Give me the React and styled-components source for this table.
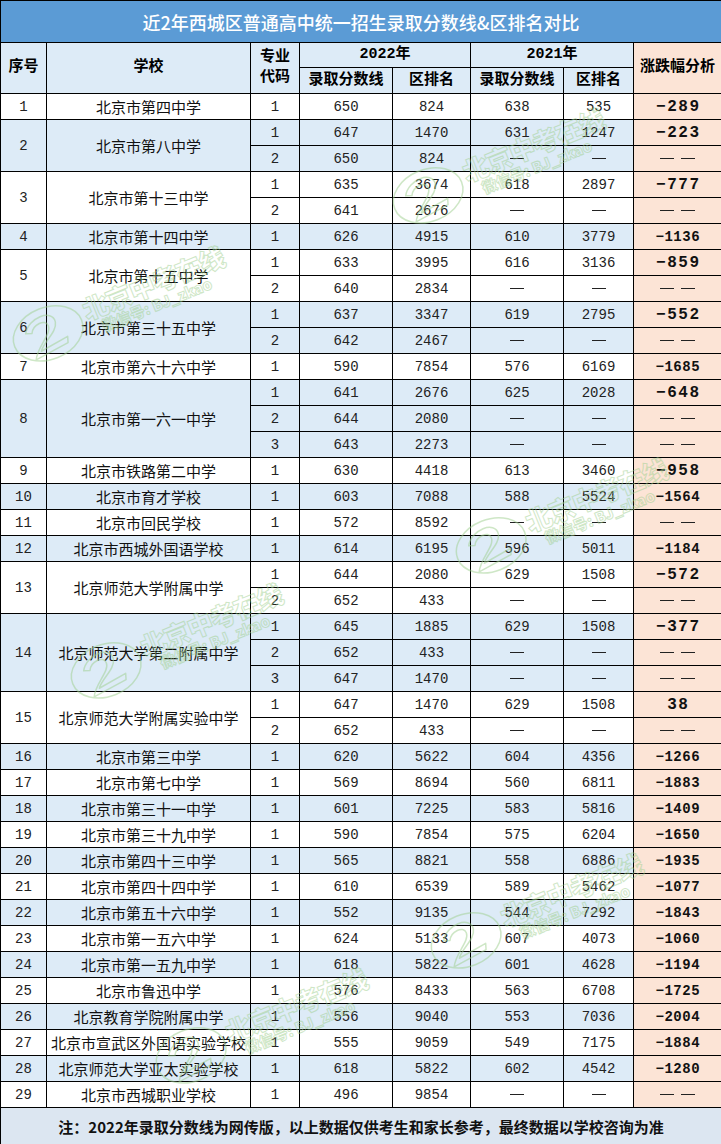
import React from 'react';
import styled, { createGlobalStyle } from 'styled-components';

const BLUE = '#ddebf7';
const PEACH = '#fce4d6';
const TITLE = '#5b9bd5';
const MARK = '#9fd08f';

const GlobalStyle = createGlobalStyle`
  html, body { margin: 0; padding: 0; background: #fff; }
  body { font-family: "Noto Sans CJK SC", "Noto Sans", sans-serif; }
`;

const Wrap = styled.div`
  position: relative;
  width: 721px;
  height: 1144px;
  overflow: hidden;
`;

const Table = styled.table`
  width: 721px;
  border-collapse: collapse;
  table-layout: fixed;
  color: #000;
  font-family: "Noto Sans CJK SC", sans-serif;
`;

const Col = styled.col`
  width: ${(p) => p.$w}px;
`;

const TitleRow = styled.tr`
  height: 42px;
`;

const TitleCell = styled.th`
  background: ${TITLE};
  color: #fff;
  font-size: 18px;
  font-weight: 500;
  border: 1px solid #000;
  padding: 0;
  text-align: center;
`;

const HeadRow = styled.tr`
  height: ${(p) => p.$h}px;
`;

const HeadCell = styled.th`
  background: ${(p) => (p.$peach ? PEACH : BLUE)};
  border: 1px solid #000;
  font-size: 15px;
  font-weight: 700;
  padding: 0;
  line-height: 20px;
  text-align: center;
  font-family: "Liberation Mono", "Noto Sans CJK SC", monospace;
`;

const Row = styled.tr`
  height: 26px;
`;

const Cell = styled.td`
  background: ${(p) => (p.$shade ? BLUE : '#fff')};
  border: 1px solid #000;
  padding: 0;
  text-align: center;
  font-size: 14px;
  color: #222;
  font-family: "Liberation Mono", "Noto Sans CJK SC", monospace;
  line-height: 18px;
`;

const NameCell = styled(Cell)`
  font-family: "Noto Sans CJK SC", sans-serif;
  font-size: 15px;
  color: #111;
  white-space: nowrap;
`;

const Dashes = styled.span`
  display: inline-flex;
  gap: 7px;
  vertical-align: middle;
`;

const DashBar = styled.span`
  display: inline-block;
  width: 14px;
  height: 1px;
  background: #222;
`;

const DeltaCell = styled(Cell)`
  background: ${PEACH};
  font-weight: 700;
  color: #111;
`;

const DeltaText = styled.span`
  font-size: ${(p) => (p.$long ? 14 : 16)}px;
  letter-spacing: ${(p) => (p.$long ? 0.5 : 1.5)}px;
  margin-right: ${(p) => (p.$long ? -0.5 : -1.5)}px;
`;

const FootRow = styled.tr`
  height: 37px;
`;

const FootCell = styled.td`
  background: #dce6f1;
  border: 1px solid #000;
  font-size: 15px;
  font-weight: 700;
  text-align: center;
  padding: 0;
  color: #111;
`;

const Watermark = styled.div`
  position: absolute;
  left: ${(p) => p.$x}px;
  top: ${(p) => p.$y}px;
  display: flex;
  align-items: center;
  gap: 2px;
  transform: rotate(-22deg);
  transform-origin: left center;
  pointer-events: none;
  opacity: 0.5;
`;

const WmText = styled.div`
  display: flex;
  flex-direction: column;
  align-items: flex-start;
  color: transparent;
  -webkit-text-stroke: 1px ${MARK};
  font-family: "Noto Sans CJK SC", sans-serif;
  font-weight: 900;
  line-height: 1.05;
`;

const WmBig = styled.span`
  font-size: 26px;
  letter-spacing: -1px;
`;

const WmSmall = styled.span`
  font-size: 15px;
  margin-left: 12px;
`;

const Logo = () => (
  <svg width="78" height="60" viewBox="0 0 78 60">
    <ellipse cx="39" cy="30" rx="36" ry="26" fill="none" stroke={MARK} strokeWidth="1.5" />
    <path
      d="M18 22 C26 8 52 8 50 22 C48 32 32 36 26 44 L56 40 L54 46 L18 50 C24 38 42 32 42 23 C42 15 28 16 24 24 Z"
      fill="none"
      stroke={MARK}
      strokeWidth="1.5"
      strokeLinejoin="round"
    />
  </svg>
);

const D = null;
const schools = [
  ['北京市第四中学', [[1, 650, 824, 638, 535, '−289']]],
  ['北京市第八中学', [[1, 647, 1470, 631, 1247, '−223'], [2, 650, 824, D, D, D]]],
  ['北京市第十三中学', [[1, 635, 3674, 618, 2897, '−777'], [2, 641, 2676, D, D, D]]],
  ['北京市第十四中学', [[1, 626, 4915, 610, 3779, '−1136']]],
  ['北京市第十五中学', [[1, 633, 3995, 616, 3136, '−859'], [2, 640, 2834, D, D, D]]],
  ['北京市第三十五中学', [[1, 637, 3347, 619, 2795, '−552'], [2, 642, 2467, D, D, D]]],
  ['北京市第六十六中学', [[1, 590, 7854, 576, 6169, '−1685']]],
  ['北京市第一六一中学', [[1, 641, 2676, 625, 2028, '−648'], [2, 644, 2080, D, D, D], [3, 643, 2273, D, D, D]]],
  ['北京市铁路第二中学', [[1, 630, 4418, 613, 3460, '−958']]],
  ['北京市育才学校', [[1, 603, 7088, 588, 5524, '−1564']]],
  ['北京市回民学校', [[1, 572, 8592, D, D, D]]],
  ['北京市西城外国语学校', [[1, 614, 6195, 596, 5011, '−1184']]],
  ['北京师范大学附属中学', [[1, 644, 2080, 629, 1508, '−572'], [2, 652, 433, D, D, D]]],
  ['北京师范大学第二附属中学', [[1, 645, 1885, 629, 1508, '−377'], [2, 652, 433, D, D, D], [3, 647, 1470, D, D, D]]],
  ['北京师范大学附属实验中学', [[1, 647, 1470, 629, 1508, '38'], [2, 652, 433, D, D, D]]],
  ['北京市第三中学', [[1, 620, 5622, 604, 4356, '−1266']]],
  ['北京市第七中学', [[1, 569, 8694, 560, 6811, '−1883']]],
  ['北京市第三十一中学', [[1, 601, 7225, 583, 5816, '−1409']]],
  ['北京市第三十九中学', [[1, 590, 7854, 575, 6204, '−1650']]],
  ['北京市第四十三中学', [[1, 565, 8821, 558, 6886, '−1935']]],
  ['北京市第四十四中学', [[1, 610, 6539, 589, 5462, '−1077']]],
  ['北京市第五十六中学', [[1, 552, 9135, 544, 7292, '−1843']]],
  ['北京市第一五六中学', [[1, 624, 5133, 607, 4073, '−1060']]],
  ['北京市第一五九中学', [[1, 618, 5822, 601, 4628, '−1194']]],
  ['北京市鲁迅中学', [[1, 576, 8433, 563, 6708, '−1725']]],
  ['北京教育学院附属中学', [[1, 556, 9040, 553, 7036, '−2004']]],
  ['北京市宣武区外国语实验学校', [[1, 555, 9059, 549, 7175, '−1884']]],
  ['北京师范大学亚太实验学校', [[1, 618, 5822, 602, 4542, '−1280']]],
  ['北京市西城职业学校', [[1, 496, 9854, D, D, D]]],
];

const widths = [46, 204, 49, 93, 78, 93, 70, 88];

const Dash = ({ n = 1 }) => (
  <Dashes>
    {Array.from({ length: n }).map((_, k) => (
      <DashBar key={k} />
    ))}
  </Dashes>
);

const val = (v) => (v === null ? <Dash /> : v);

const marks = [
  { x: 392, y: 180 },
  { x: 12, y: 318 },
  { x: 455, y: 530 },
  { x: 70, y: 655 },
  { x: 430, y: 925 },
  { x: 155, y: 1040 },
];

export default function App() {
  return (
    <Wrap>
      <GlobalStyle />
      <Table>
        <colgroup>
          {widths.map((w, i) => (
            <Col key={i} $w={w} />
          ))}
        </colgroup>
        <thead>
          <TitleRow>
            <TitleCell colSpan={8}>近2年西城区普通高中统一招生录取分数线&amp;区排名对比</TitleCell>
          </TitleRow>
          <HeadRow $h={25}>
            <HeadCell rowSpan={2}>序号</HeadCell>
            <HeadCell rowSpan={2}>学校</HeadCell>
            <HeadCell rowSpan={2}>
              专业
              <br />
              代码
            </HeadCell>
            <HeadCell colSpan={2}>2022年</HeadCell>
            <HeadCell colSpan={2}>2021年</HeadCell>
            <HeadCell rowSpan={2} $peach>
              涨跌幅分析
            </HeadCell>
          </HeadRow>
          <HeadRow $h={26}>
            <HeadCell>录取分数线</HeadCell>
            <HeadCell>区排名</HeadCell>
            <HeadCell>录取分数线</HeadCell>
            <HeadCell>区排名</HeadCell>
          </HeadRow>
        </thead>
        <tbody>
          {schools.map(([name, rows], i) => {
            const shade = i % 2 === 1;
            return rows.map((r, j) => (
              <Row key={`${i}-${j}`}>
                {j === 0 && (
                  <Cell rowSpan={rows.length} $shade={shade}>
                    {i + 1}
                  </Cell>
                )}
                {j === 0 && (
                  <NameCell rowSpan={rows.length} $shade={shade}>
                    {name}
                  </NameCell>
                )}
                <Cell $shade={shade}>{r[0]}</Cell>
                <Cell $shade={shade}>{val(r[1])}</Cell>
                <Cell $shade={shade}>{val(r[2])}</Cell>
                <Cell $shade={shade}>{val(r[3])}</Cell>
                <Cell $shade={shade}>{val(r[4])}</Cell>
                <DeltaCell>
                  {r[5] === null ? (
                    <Dash n={2} />
                  ) : (
                    <DeltaText $long={r[5].length >= 5}>{r[5]}</DeltaText>
                  )}
                </DeltaCell>
              </Row>
            ));
          })}
        </tbody>
        <tfoot>
          <FootRow>
            <FootCell colSpan={8}>
              注：2022年录取分数线为网传版，以上数据仅供考生和家长参考，最终数据以学校咨询为准
            </FootCell>
          </FootRow>
        </tfoot>
      </Table>
      {marks.map((m, i) => (
        <Watermark key={i} $x={m.x} $y={m.y}>
          <Logo />
          <WmText>
            <WmBig>北京中考在线</WmBig>
            <WmSmall>微信号: BJ_zkao</WmSmall>
          </WmText>
        </Watermark>
      ))}
    </Wrap>
  );
}
